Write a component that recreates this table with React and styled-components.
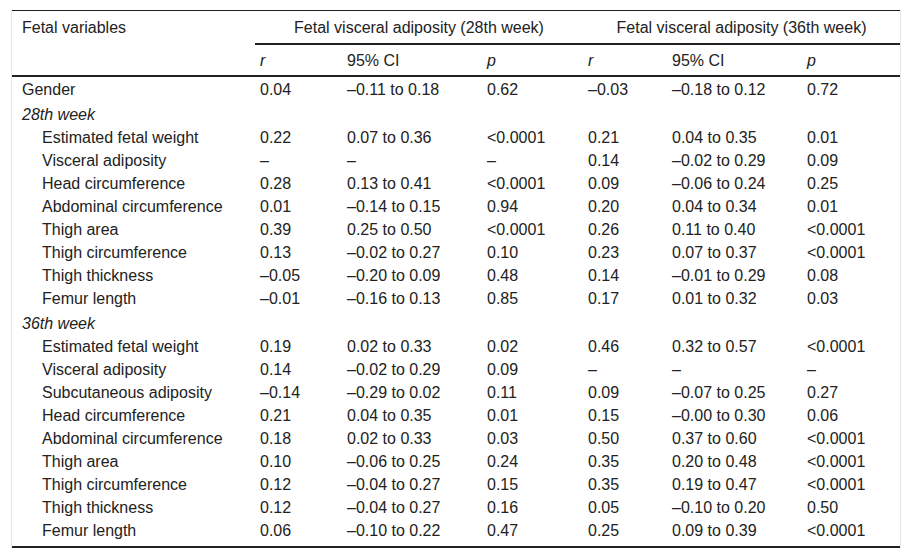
import React from 'react';
import styled, { createGlobalStyle } from 'styled-components';

const GlobalStyle = createGlobalStyle`
  body {
    margin: 0;
    background: #fff;
    font-family: "Liberation Sans", Arial, sans-serif;
    color: #222;
  }
`;

const sections = [
  {
    title: '28th week',
    rows: [
      ['Estimated fetal weight', '0.22', '0.07 to 0.36', '<0.0001', '0.21', '0.04 to 0.35', '0.01'],
      ['Visceral adiposity', '–', '–', '–', '0.14', '–0.02 to 0.29', '0.09'],
      ['Head circumference', '0.28', '0.13 to 0.41', '<0.0001', '0.09', '–0.06 to 0.24', '0.25'],
      ['Abdominal circumference', '0.01', '–0.14 to 0.15', '0.94', '0.20', '0.04 to 0.34', '0.01'],
      ['Thigh area', '0.39', '0.25 to 0.50', '<0.0001', '0.26', '0.11 to 0.40', '<0.0001'],
      ['Thigh circumference', '0.13', '–0.02 to 0.27', '0.10', '0.23', '0.07 to 0.37', '<0.0001'],
      ['Thigh thickness', '–0.05', '–0.20 to 0.09', '0.48', '0.14', '–0.01 to 0.29', '0.08'],
      ['Femur length', '–0.01', '–0.16 to 0.13', '0.85', '0.17', '0.01 to 0.32', '0.03'],
    ],
  },
  {
    title: '36th week',
    rows: [
      ['Estimated fetal weight', '0.19', '0.02 to 0.33', '0.02', '0.46', '0.32 to 0.57', '<0.0001'],
      ['Visceral adiposity', '0.14', '–0.02 to 0.29', '0.09', '–', '–', '–'],
      ['Subcutaneous adiposity', '–0.14', '–0.29 to 0.02', '0.11', '0.09', '–0.07 to 0.25', '0.27'],
      ['Head circumference', '0.21', '0.04 to 0.35', '0.01', '0.15', '–0.00 to 0.30', '0.06'],
      ['Abdominal circumference', '0.18', '0.02 to 0.33', '0.03', '0.50', '0.37 to 0.60', '<0.0001'],
      ['Thigh area', '0.10', '–0.06 to 0.25', '0.24', '0.35', '0.20 to 0.48', '<0.0001'],
      ['Thigh circumference', '0.12', '–0.04 to 0.27', '0.15', '0.35', '0.19 to 0.47', '<0.0001'],
      ['Thigh thickness', '0.12', '–0.04 to 0.27', '0.16', '0.05', '–0.10 to 0.20', '0.50'],
      ['Femur length', '0.06', '–0.10 to 0.22', '0.47', '0.25', '0.09 to 0.39', '<0.0001'],
    ],
  },
];

const colWidths = [243, 87, 140, 101, 84, 135, 98];

const App = () => {
  return (
    <>
      <GlobalStyle />
      <Frame>
        <Table>
          <colgroup>
            {colWidths.map((w, i) => (
              <col key={i} style={{ width: w }} />
            ))}
          </colgroup>
          <thead>
            <tr>
              <CornerCell rowSpan={2}>Fetal variables</CornerCell>
              <GroupCell colSpan={3}>Fetal visceral adiposity (28th week)</GroupCell>
              <GroupCell colSpan={3}>Fetal visceral adiposity (36th week)</GroupCell>
            </tr>
            <tr>
              <SubCell $italic>r</SubCell>
              <SubCell>95% CI</SubCell>
              <SubCell $italic>p</SubCell>
              <SubCell $italic>r</SubCell>
              <SubCell>95% CI</SubCell>
              <SubCell $italic>p</SubCell>
            </tr>
          </thead>
          <tbody>
            <tr>
              <LabelCell>Gender</LabelCell>
              <Cell>0.04</Cell>
              <Cell>–0.11 to 0.18</Cell>
              <Cell>0.62</Cell>
              <Cell>–0.03</Cell>
              <Cell>–0.18 to 0.12</Cell>
              <Cell>0.72</Cell>
            </tr>
            {sections.map((section, si) => (
              <React.Fragment key={section.title}>
                <tr>
                  <SectionCell colSpan={7}>{section.title}</SectionCell>
                </tr>
                {section.rows.map((row, ri) => {
                  const last = si === sections.length - 1 && ri === section.rows.length - 1;
                  return (
                    <tr key={row[0]}>
                      <LabelCell $indent $last={last}>{row[0]}</LabelCell>
                      {row.slice(1).map((v, ci) => (
                        <Cell key={ci} $last={last}>{v}</Cell>
                      ))}
                    </tr>
                  );
                })}
              </React.Fragment>
            ))}
          </tbody>
        </Table>
      </Frame>
    </>
  );
};

const Frame = styled.div`
  box-sizing: border-box;
  width: 890px;
  margin: 10px 0 0 11px;
  border-left: 1px solid #e6e6e6;
  border-right: 1px solid #e6e6e6;
`;

const Table = styled.table`
  width: 888px;
  table-layout: fixed;
  border-collapse: separate;
  border-spacing: 0;
  border-top: 1px solid #222;
  font-size: 16px;
  line-height: 18px;
  color: #222;
`;

const CornerCell = styled.th`
  text-align: left;
  font-weight: normal;
  vertical-align: top;
  padding: 8px 5px 0 10px;
  border-bottom: 2px solid #222;
  white-space: nowrap;
`;

const GroupCell = styled.th`
  font-weight: normal;
  text-align: center;
  padding: 8px 5px 6px;
  border-bottom: 2px solid #222;
  white-space: nowrap;
`;

const SubCell = styled.th`
  font-weight: normal;
  text-align: left;
  padding: 7px 5px 5px;
  border-bottom: 2px solid #222;
  font-style: ${(p) => (p.$italic ? 'italic' : 'normal')};
  white-space: nowrap;
`;

const Cell = styled.td`
  padding: 4px 5px ${(p) => (p.$last ? '6px' : '1px')};
  border-bottom: ${(p) => (p.$last ? '2px solid #222' : 'none')};
  white-space: nowrap;
  vertical-align: top;
`;

const LabelCell = styled(Cell)`
  padding-left: ${(p) => (p.$indent ? '30px' : '10px')};
`;

const SectionCell = styled.td`
  padding: 6px 5px 1px 10px;
  font-style: italic;
`;

export default App;
